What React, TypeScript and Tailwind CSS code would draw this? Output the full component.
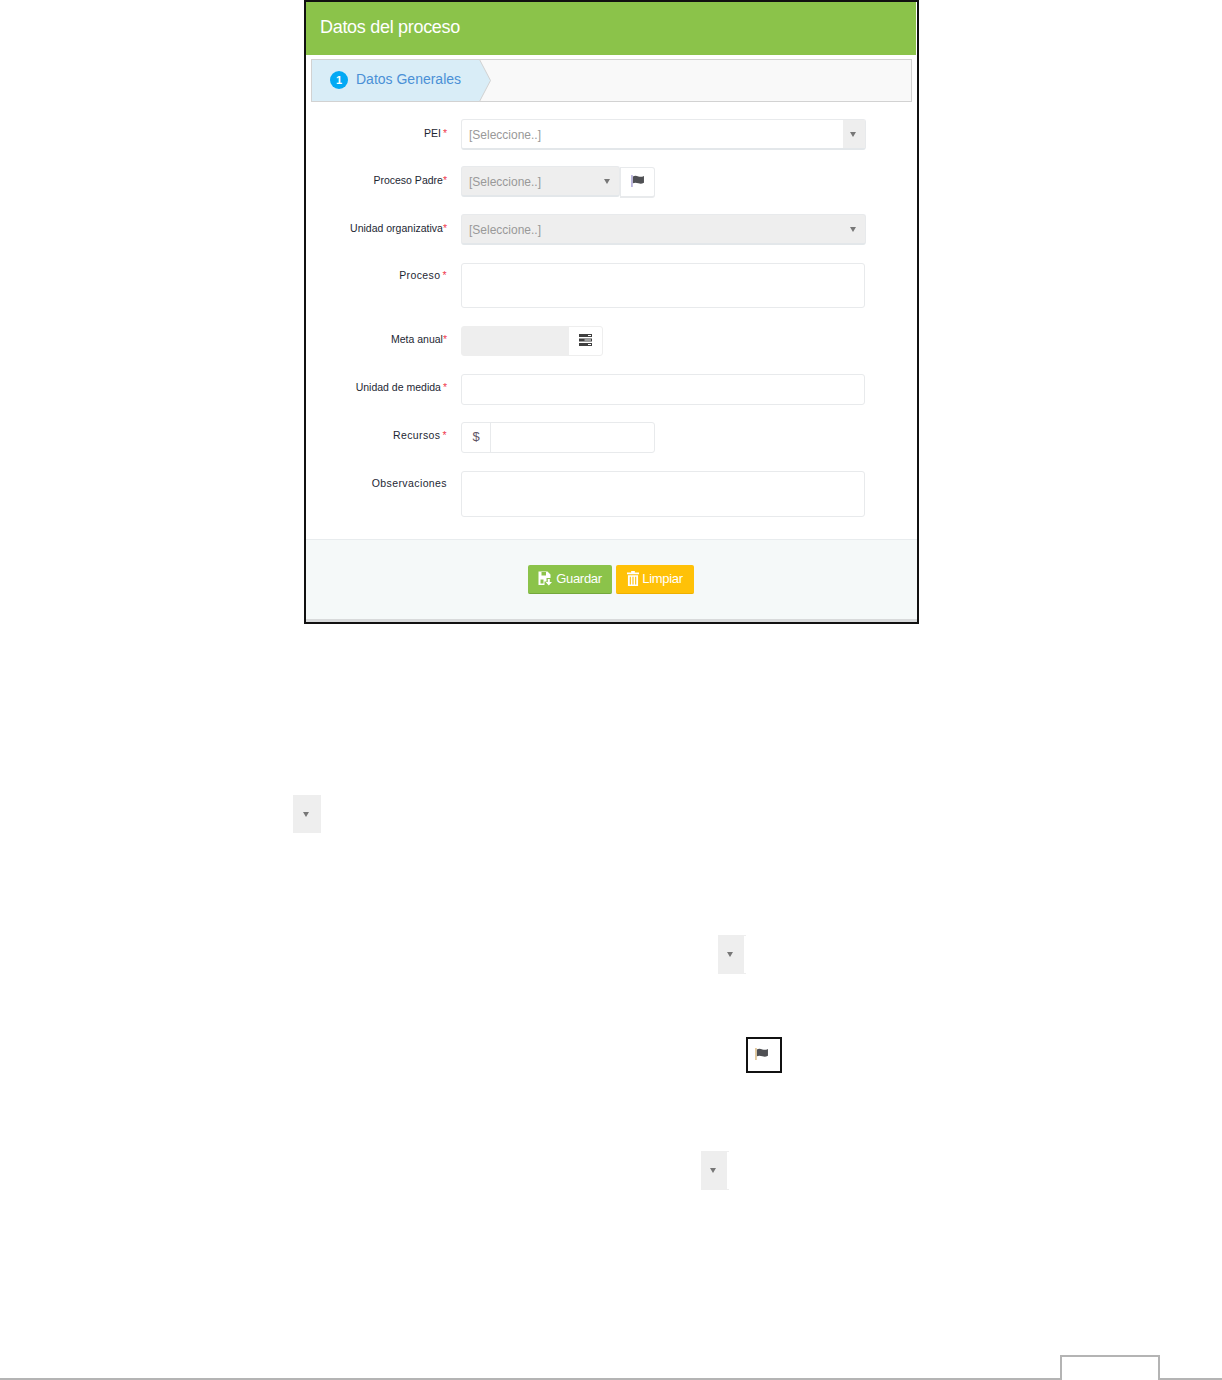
function Caret() {
  return <span className="block w-0 h-0 border-x-[3.5px] border-x-transparent border-t-[5px] border-t-[#777777]" />;
}

function FlagIcon({ pole, className = "" }: { pole: string; className?: string }) {
  return (
    <svg width="13" height="12" viewBox="0 0 14 13" className={className}>
      <rect x="0.5" y="0" width="1" height="13" className={pole} />
      <path d="M2 1.5C4 0.3 6 0.8 8 1.5S11.5 2.2 14 1v7.5C11.5 9.7 10 9.7 8 9S4 7.8 2 9z" className="fill-[#4f5054]" />
    </svg>
  );
}

function Label({ text, star = "*", top = "pt-2", spaced = false, gap = false }: { text: string; star?: string; top?: string; spaced?: boolean; gap?: boolean }) {
  return (
    <div className={`w-[141px] shrink-0 text-right text-[10.5px] leading-[12px] text-[#1d2733] ${top} ${spaced ? "tracking-[0.4px]" : ""}`}>
      {text}
      <span className={`text-[#ef3b4f] ${gap ? "ml-[2px]" : ""}`}>{star}</span>
    </div>
  );
}

function SelectBox({ width, disabled = false }: { width: string; disabled?: boolean }) {
  return (
    <div className={`${width} h-[31px] flex items-stretch rounded-[3px] border border-[#e8eaec] border-b-2 border-b-[#e3e7ea] ${disabled ? "bg-[#eeeeee]" : "bg-white"}`}>
      <span className="flex-1 pl-[7px] pt-[8px] text-[12px] leading-[15px] text-[#999999]">[Seleccione..]</span>
      <span className={`w-[22px] flex items-center justify-center pr-[2px] ${disabled ? "" : "bg-[#eeeeee]"}`}>
        <Caret />
      </span>
    </div>
  );
}

function SaveIcon() {
  return (
    <svg width="15" height="15" viewBox="0 0 15 15" className="fill-white">
      <path d="M0.5 0.5h9L12.5 3.5V7H8.5v3.5H6.5v3.5H0.5zM3.5 1v3.5h4.5V1zM2.5 8.5v4h3v-4z" fillRule="evenodd" />
      <path d="M9.8 8h2v3h2.2l-3.2 3.5-3.2-3.5h2.2z" />
    </svg>
  );
}

function TrashIcon() {
  return (
    <svg width="12" height="15" viewBox="0 0 13 16" className="fill-white">
      <path d="M4.5 0h4v1.5H13V3.5H0V1.5h4.5z" />
      <path d="M1 4.5h11V16H1zM3 6v8.5h1.2V6zM5.9 6v8.5h1.2V6zM8.8 6v8.5H10V6z" fillRule="evenodd" />
    </svg>
  );
}

function ServerIcon() {
  return (
    <svg width="13" height="12" viewBox="0 0 13 12" className="mb-[2px] fill-[#3f3f3f]">
      <path d="M0 0h13v3H0zM9 1v1h3V1zM0 4.5h13v3H0zM5.5 5.5v1H12v-1zM0 9h13v3H0zM9 10v1h3v-1z" fillRule="evenodd" />
    </svg>
  );
}

function Fragment({ className, ticks = false }: { className: string; ticks?: boolean }) {
  return (
    <div className={`flex w-[28px] ${className}`}>
      <div className={`${ticks ? "w-[26px]" : "w-[28px]"} bg-[#eeeeee] flex items-center justify-center pr-[2px]`}>
        <Caret />
      </div>
      {ticks && <div className="w-[2px] border-y border-[#eeeeee]" />}
    </div>
  );
}

export default function App() {
  return (
    <div className="w-[1222px] h-[1380px] bg-white overflow-hidden font-['Liberation_Sans',Arial,sans-serif]">
      <div className="ml-[304px] w-[615px] h-[624px] border-2 border-[#111111] flex flex-col">
        <div className="h-[53px] mr-[1px] shrink-0 bg-[#8bc34a] pl-[14px] pt-[14px] text-[18px] leading-[22px] tracking-[-0.3px] text-white">
          Datos del proceso
        </div>

        <div className="relative mt-[4px] ml-[5px] w-[601px] h-[43px] shrink-0 border border-[#d2d2d2] bg-[#f9f9f9]">
          <svg width="181" height="43" viewBox="0 0 181 43" className="absolute -left-px -top-px">
            <polygon points="0.5,0.5 168.5,0.5 179.5,21.5 168.5,42.5 0.5,42.5" className="fill-[#d9edf7] stroke-[#d2d2d2]" />
          </svg>
          <div className="relative flex items-center h-full pl-[18px] gap-[8px]">
            <span className="w-[18px] h-[18px] mb-[2px] rounded-full bg-[#03a9f4] text-white text-[11px] font-bold leading-[18px] text-center">1</span>
            <span className="text-[14px] leading-[18px] mb-[3px] text-[#4a90d6]">Datos Generales</span>
          </div>
        </div>

        <div className="flex-1 flex flex-col pt-[17px]">
          <div className="flex gap-[14px] h-[47px]">
            <Label text="PEI" top="pt-[8px]" gap />
            <SelectBox width="w-[405px]" />
          </div>
          <div className="flex gap-[14px] h-[48px]">
            <Label text="Proceso Padre" top="pt-[8px]" />
            <SelectBox width="w-[159px]" disabled />
            <div className="-ml-[14px] mt-[1px] w-[35px] h-[31px] flex items-center justify-center rounded-r-[3px] border border-[#e8eaec] border-b-2">
              <FlagIcon pole="fill-[#7a6fc0]" className="mb-[3px]" />
            </div>
          </div>
          <div className="flex gap-[14px] h-[49px]">
            <Label text="Unidad organizativa" top="pt-[8px]" />
            <SelectBox width="w-[405px]" disabled />
          </div>
          <div className="flex gap-[14px] h-[63px]">
            <Label text="Proceso" top="pt-[6px]" spaced gap />
            <div className="w-[404px] h-[45px] rounded-[3px] border border-[#e8eaec]" />
          </div>
          <div className="flex gap-[14px] h-[48px]">
            <Label text="Meta anual" top="pt-[7px]" />
            <div className="w-[142px] h-[30px] flex rounded-[3px] border border-[#eeeeee]">
              <div className="w-[107px] bg-[#eeeeee]" />
              <div className="flex-1 flex items-center justify-center">
                <ServerIcon />
              </div>
            </div>
          </div>
          <div className="flex gap-[14px] h-[48px]">
            <Label text="Unidad de medida" top="pt-[7px]" gap />
            <div className="w-[404px] h-[31px] rounded-[3px] border border-[#e8eaec]" />
          </div>
          <div className="flex gap-[14px] h-[49px]">
            <Label text="Recursos" top="pt-[7px]" spaced gap />
            <div className="w-[194px] h-[31px] flex rounded-[3px] border border-[#e8eaec]">
              <div className="w-[29px] border-r border-[#e8eaec] text-center text-[13px] leading-[27px] text-[#5f5566]">$</div>
            </div>
          </div>
          <div className="flex gap-[14px]">
            <Label text="Observaciones" star="" top="pt-[6px]" spaced />
            <div className="w-[404px] h-[46px] rounded-[3px] border border-[#e8eaec]" />
          </div>

          <div className="mt-[22px] flex-1 border-t border-[#e8ecee] border-b-[3px] border-b-[#d8dadb] bg-[#f5f9f9] flex justify-center gap-[4px] pt-[25px] pr-[1px]">
            <button className="w-[84px] h-[29px] pb-[1px] flex items-center justify-center gap-[3px] rounded-[2px] bg-[#8bc34a] border-b border-b-[#74a83c] text-[13px] tracking-[-0.3px] text-white">
              <SaveIcon />
              Guardar
            </button>
            <button className="w-[78px] h-[29px] pb-[1px] flex items-center justify-center gap-[3px] rounded-[2px] bg-[#ffc107] border-b border-b-[#eeb000] text-[13px] tracking-[-0.3px] text-white">
              <TrashIcon />
              Limpiar
            </button>
          </div>
        </div>
      </div>

      <Fragment className="ml-[293px] mt-[171px] h-[38px]" />
      <Fragment className="ml-[718px] mt-[102px] h-[39px]" ticks />
      <div className="ml-[746px] mt-[63px] w-[36px] h-[36px] border-2 border-[#111111] flex items-center justify-center pr-[5px] pb-[2px]">
        <FlagIcon pole="fill-[#c9963c]" />
      </div>
      <Fragment className="ml-[701px] mt-[78px] h-[39px]" ticks />

      <div className="mt-[165px] h-[25px] flex items-end">
        <div className="w-[1060px] h-[2px] bg-[#b4b4b4]" />
        <div className="w-[100px] h-[25px] border-2 border-b-0 border-[#b4b4b4]" />
        <div className="flex-1 h-[2px] bg-[#b4b4b4]" />
      </div>
    </div>
  );
}
